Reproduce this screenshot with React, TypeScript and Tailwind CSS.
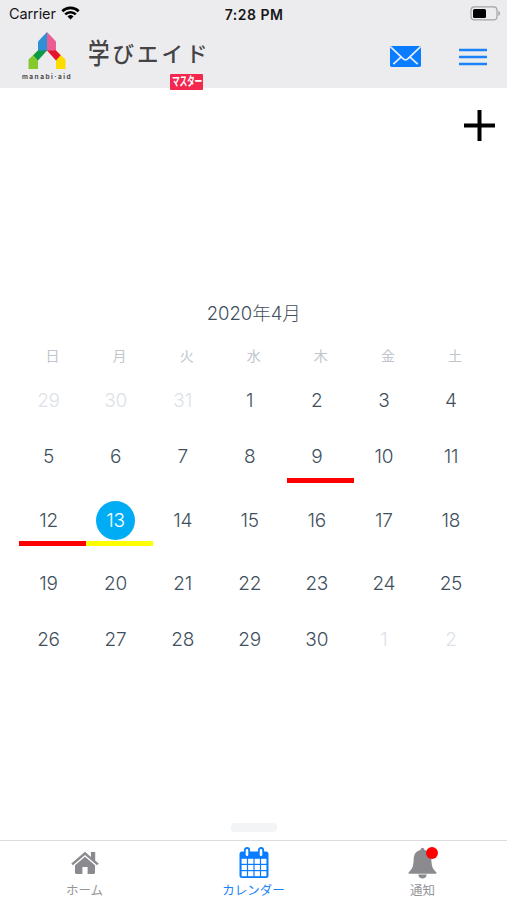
import React from 'react';
import clsx from 'clsx';

interface Day {
  label: number;
  muted?: boolean;
  selected?: boolean;
  mark?: 'red' | 'yellow';
}

const WEEKDAYS = ['日', '月', '火', '水', '木', '金', '土'];

const WEEKS: Day[][] = [
  [{ label: 29, muted: true }, { label: 30, muted: true }, { label: 31, muted: true }, { label: 1 }, { label: 2 }, { label: 3 }, { label: 4 }],
  [{ label: 5 }, { label: 6 }, { label: 7 }, { label: 8 }, { label: 9, mark: 'red' }, { label: 10 }, { label: 11 }],
  [{ label: 12, mark: 'red' }, { label: 13, mark: 'yellow', selected: true }, { label: 14 }, { label: 15 }, { label: 16 }, { label: 17 }, { label: 18 }],
  [{ label: 19 }, { label: 20 }, { label: 21 }, { label: 22 }, { label: 23 }, { label: 24 }, { label: 25 }],
  [{ label: 26 }, { label: 27 }, { label: 28 }, { label: 29 }, { label: 30 }, { label: 1, muted: true }, { label: 2, muted: true }],
];

const StatusBar: React.FC = () => (
  <div className="grid h-7 grid-cols-3 items-center pl-[9px] pr-[6px] text-[14px] text-[#161618]">
    <div className="flex items-center gap-[5px]">
      <span className="text-[14.5px] tracking-[-0.1px]">Carrier</span>
      <svg className="relative top-[-1px]" width="19" height="14" viewBox="0 0 19 14" fill="none" stroke="#000" strokeWidth="2.6">
        <path d="M1.3 5.2a11.8 11.8 0 0 1 16.4 0" />
        <path d="M4.2 8.4a7.6 7.6 0 0 1 10.6 0" />
        <path d="M9.5 13.6 6.5 10.5a4.4 4.4 0 0 1 6 0z" fill="#000" stroke="none" />
      </svg>
    </div>
    <span className="pr-[2px] text-center text-[14px] font-semibold tracking-[0.5px]">7:28 PM</span>
    <svg className="relative top-[-1px] justify-self-end" width="31" height="15" viewBox="0 0 31 15" fill="none">
      <rect x="1" y=".9" width="26" height="13" rx="3.5" stroke="#a3a2a4" strokeWidth="1.2" />
      <rect x="3" y="2.9" width="13" height="9" rx="1.5" fill="#000" />
      <path d="M28.3 5c2.2.6 2.2 4.2 0 4.8z" fill="#a3a2a4" />
    </svg>
  </div>
);

const ManabiLogo: React.FC = () => (
  <div className="flex w-[52px] flex-col items-center">
    <svg width="38" height="38" viewBox="0 0 38 38">
      <path d="M19 0 10 9.5V19h9z" fill="#2e90d6" />
      <path d="M19 0l9 9.5V19h-9z" fill="#ea5c93" />
      <path d="M10 18.5V37H.5V27.5z" fill="#86c92f" />
      <path d="M28 18.5l9.5 9V37H28z" fill="#ffdc00" />
      <path d="M10 18.5h9L10 28.5l-4.700-5.200z" fill="#0c9a45" />
      <path d="M28 18.500h-9l9 10 4.700-5.200z" fill="#e4142f" />
    </svg>
    <span className="mt-[3px] text-[6.5px] font-bold leading-[8px] tracking-[1.5px] whitespace-nowrap text-[#4a4a4c]">manabi·aid</span>
  </div>
);

const Wordmark: React.FC = () => (
  <div className="relative ml-[15px] mt-[3px] flex h-[40px] w-[122px] items-center">
    <span className="flex items-center text-[21.5px] font-medium leading-none tracking-[3px] whitespace-nowrap text-[#444346]">
      <span className="inline-block scale-y-[1.3]">学</span>
      <span>びエイド</span>
    </span>
    <span className="absolute left-[82px] top-[39px] flex h-[16px] w-[33px] items-center justify-center rounded-[1px] bg-[#f4274f]">
      <span className="scale-x-[.65] text-[12px] font-bold leading-none tracking-[-0.5px] whitespace-nowrap text-white">マスター</span>
    </span>
  </div>
);

const Header: React.FC = () => (
  <header className="h-[88px] bg-[#ececee]">
    <StatusBar />
    <div className="flex h-[60px] items-start pl-[21px] pr-[20px] pt-[4px]">
      <ManabiLogo />
      <Wordmark />
      <div className="ml-auto mt-[14px] flex items-center gap-[38px]">
        <svg width="31" height="21" viewBox="0 0 31 21">
          <rect width="31" height="21" rx="1.8" fill="#0a7cff" />
          <path d="M.6.9 13 12.7c1.5 1.4 3.5 1.4 5 0L30.4.9M3.3 18.2l7.900-7.300M27.700 18.200l-7.900-7.300" fill="none" stroke="#e5effb" strokeWidth="1.7" />
        </svg>
        <svg width="28" height="18" viewBox="0 0 28 18" stroke="#1c82f7" strokeWidth="2.3">
          <path d="M0 2h28M0 9h28M0 16h28" />
        </svg>
      </div>
    </div>
  </header>
);

const DayCell: React.FC<{ day: Day; underlined: boolean }> = ({ day, underlined }) => (
  <div className="flex flex-col">
    <div
      className={clsx(
        'ml-[10px] flex size-[39px] items-center justify-center rounded-full pt-[1px] text-[19px] font-light tracking-[-0.2px]',
        day.selected ? 'bg-[#00adf5] text-white' : day.muted ? 'text-[#dde2e7]' : 'text-[#3f505d]'
      )}
    >
      {day.label}
    </div>
    {underlined && (
      <div className={clsx('mb-[1.5px] mt-[1px] h-[5px]', day.mark === 'red' && 'bg-[#ff0000]', day.mark === 'yellow' && 'bg-[#ffff00]')} />
    )}
  </div>
);

const Calendar: React.FC = () => (
  <section className="pl-[19px] pr-[18.5px]">
    <h1 className="text-center text-[18.5px] font-light leading-[26px] text-[#3f505d]">2020年4月</h1>
    <div className="mt-[20px] grid grid-cols-7 text-center text-[14px] leading-[20px] text-[#c0c6cc]">
      {WEEKDAYS.map((name) => (
        <span key={name}>{name}</span>
      ))}
    </div>
    <div className="mt-[15.5px] flex flex-col gap-[17px]">
      {WEEKS.map((week, i) => (
        <div key={i} className="grid grid-cols-7">
          {week.map((day) => (
            <DayCell key={day.label} day={day} underlined={week.some((d) => d.mark)} />
          ))}
        </div>
      ))}
    </div>
  </section>
);

const HomeIcon: React.FC = () => (
  <svg width="28" height="24" viewBox="0 0 28 24" fill="#8a8a8f">
    <path d="M14 .8.3 12.6l1.6 1.700L14 4l12.100 10.300 1.600-1.700-3.500-3V1h-4.300v4.900z" />
    <path d="M14 5.800 4 14.300v7.200c0 .9.500 1.400 1.400 1.400h6V16h5.200v6.900h6c.9 0 1.400-.5 1.400-1.400v-7.200z" />
  </svg>
);

const CalendarIcon: React.FC = () => (
  <svg width="30" height="32" viewBox="0 0 30 32">
    <rect x=".5" y="4.5" width="29" height="26.5" rx="2.5" fill="#0a7cff" />
    {[2.6, 9.1, 15.6, 22.1].map((x) =>
      [11.8, 18, 24.2].map((y) => <rect key={`${x}-${y}`} x={x} y={y} width="5.3" height="5" fill="#fff" />)
    )}
    <rect x="5.8" y="1" width="4.4" height="9" rx="2.2" fill="#fff" stroke="#0a7cff" strokeWidth="1.8" />
    <rect x="19.8" y="1" width="4.4" height="9" rx="2.2" fill="#fff" stroke="#0a7cff" strokeWidth="1.8" />
  </svg>
);

const BellIcon: React.FC = () => (
  <div className="relative">
    <svg width="29" height="32" viewBox="0 0 29 32" fill="#8a8a8f">
      <path d="M14.5.8c1.100 0 1.900.9 1.900 2.300 4.600.9 6.700 4.400 6.900 8.900.3 6 .7 9.500 4.800 13 .8.800.5 1.700-.6 1.700h-26c-1.100 0-1.400-.9-.6-1.700 4.100-3.500 4.500-7 4.800-13 .2-4.500 2.300-8 6.900-8.900 0-1.400.8-2.300 1.900-2.300z" />
      <path d="M10.300 27.400h8.400c-.2 2.400-1.900 4-4.200 4s-4-1.600-4.200-4z" />
    </svg>
    <span className="absolute left-[18px] top-0 size-[12px] rounded-full bg-[#ff0000]" />
  </div>
);

const TABS = [
  { name: 'ホーム', icon: <HomeIcon /> },
  { name: 'カレンダー', icon: <CalendarIcon />, active: true },
  { name: '通知', icon: <BellIcon /> },
];

const TabBar: React.FC = () => (
  <nav className="grid h-[60px] grid-cols-3 border-t border-[#dadbdc]">
    {TABS.map((tab) => (
      <button key={tab.name} className="flex flex-col items-center pt-[6px]">
        <span className="flex h-[32px] items-center">{tab.icon}</span>
        <span className={clsx('mt-[2px] text-[12.5px] leading-[20px]', tab.active ? 'text-[#1a82fa]' : 'text-[#96969a]')}>{tab.name}</span>
      </button>
    ))}
  </nav>
);

export default function App() {
  return (
    <div className="flex h-[900px] w-[507px] flex-col bg-white font-['Inter','Noto_Sans_CJK_JP',sans-serif]">
      <Header />
      <div className="flex h-[212px] items-start justify-end pr-[12px] pt-[22px]">
        <svg width="31" height="31" viewBox="0 0 31 31" stroke="#000" strokeWidth="4">
          <path d="M0 15.5h31M15.5 0v31" />
        </svg>
      </div>
      <Calendar />
      <div className="mt-auto flex justify-center pb-[8px]">
        <div className="h-[9px] w-[46px] rounded-[4px] bg-[#f2f4f5]" />
      </div>
      <TabBar />
    </div>
  );
}
